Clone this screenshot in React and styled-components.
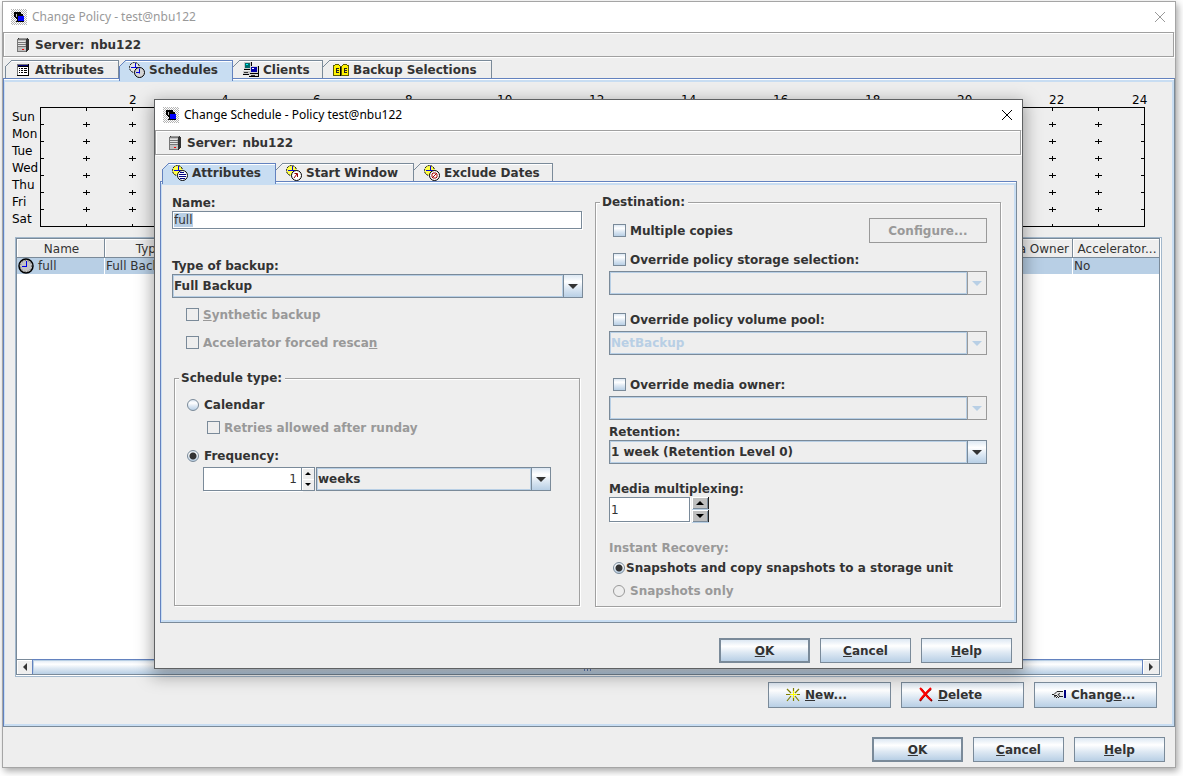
import React, { useEffect, useRef, useState } from 'react';
import styled, { createGlobalStyle, css } from 'styled-components';

const ink = '#333';
const steel = '#7a8a99';
const blue = '#6382bf';
const pale = '#c8ddf2';
const sky = '#b8cfe5';
const face = '#eee';
const dim = '#999';
const ocean = 'linear-gradient(#dde8f3, #fff 30%, #dde8f3 60%, #b8cfe5)';

const GlobalStyle = createGlobalStyle`
  * {
    box-sizing: border-box;
  }

  body {
    margin: 0;
    background: #fff;
    color: ${ink};
    font: 12px/16px "DejaVu Sans", Verdana, sans-serif;
  }

  button, input, select {
    margin: 0;
    color: inherit;
    font: inherit;
    border-radius: 0;
    outline: none;
  }

  svg {
    display: block;
    flex: none;
  }
`;

const etched = css`
  border: 1px solid #a0a0a0;
  box-shadow: 1px 1px 0 #fff, inset 1px 1px 0 #fff;
`;

const Desktop = styled.div`
  position: relative;
  display: flex;
  min-height: 100vh;
  padding: 1px 7px 8px 2px;
`;

const MainWindow = styled.main`
  display: flex;
  flex: 1;
  flex-direction: column;
  min-width: 0;
  background: ${face};
  border: 1px solid #a5a5a5;
  box-shadow: 2px 3px 7px rgba(0, 0, 0, 0.35);
`;

const Dialog = styled.section`
  position: absolute;
  top: 99px;
  left: 154px;
  right: 160px;
  display: flex;
  flex-direction: column;
  background: ${face};
  border: 1px solid #5f6163;
  box-shadow: 0 5px 16px 2px rgba(0, 0, 0, 0.35);
`;

const TitleBar = styled.header`
  display: flex;
  align-items: center;
  gap: 5px;
  height: 30px;
  padding: 0 9px 0 8px;
  background: #fff;
  color: ${(props) => (props.$active ? '#000' : dim)};
  font: 12px/16px "Noto Sans", "Open Sans", sans-serif;
`;

const CloseButton = styled.button`
  display: flex;
  margin-left: auto;
  padding: 0;
  background: none;
  border: none;
`;

const ServerBar = styled.div`
  ${etched}
  display: flex;
  align-items: center;
  gap: 6px;
  height: 25px;
  margin: 0 1px 1px 0;
  padding: 0 12px;
  font-weight: bold;
`;

const TabList = styled.div`
  display: flex;
  margin: ${(props) => (props.$inset ? '7px 7px 0' : '2px 2px 0')};
`;

const Tab = styled.button`
  position: relative;
  display: flex;
  align-items: center;
  gap: 4px;
  width: ${(props) => props.$width}px;
  height: ${(props) => (props.$selected ? 21 : 18)}px;
  margin: 0 0 ${(props) => (props.$selected ? -3 : 0)}px;
  padding: 0 0 ${(props) => (props.$selected ? 3 : 0)}px 9px;
  z-index: ${(props) => (props.$selected ? 1 : 0)};
  background: ${(props) => (props.$selected ? pale : face)};
  border: 1px solid ${(props) => (props.$selected ? blue : steel)};
  border-bottom: none;
  border-left-color: ${(props) => (props.$selected ? blue : props.$first ? steel : 'transparent')};
  box-shadow: inset 0 1px 0 #fff;
  font-weight: bold;
  white-space: nowrap;

  &::before {
    content: '';
    position: absolute;
    top: -1px;
    left: -1px;
    width: 7px;
    height: 7px;
    background: linear-gradient(
      135deg,
      ${face} 43%,
      ${(props) => (props.$selected ? blue : steel)} 44% 55%,
      ${(props) => (props.$selected ? pale : face)} 56%
    );
  }
`;

const TabPanel = styled.div`
  display: flex;
  flex: 1;
  flex-direction: column;
  margin: ${(props) => (props.$inset ? '0 5px' : 0)};
  border: 1px solid ${steel};
  border-top-color: ${blue};
  border-left-color: ${blue};
  box-shadow: inset 0 1px 0 #fff, inset 0 3px 0 ${pale}, inset 1px 0 0 ${pale}, inset -2px -2px 0 ${pale};
`;

const ChartArea = styled.div`
  display: flex;
  padding: 28px 30px 10px 8px;
  color: #000;
`;

const DayNames = styled.div`
  flex: none;
  width: 28px;
  padding-top: 1px;
  line-height: 17px;

  div {
    padding-top: 1px;
    height: 17px;
  }
`;

const Chart = styled.svg`
  flex: 1;
  width: 100%;
  min-width: 0;
  height: 120px;
  overflow: visible;

  text {
    font-size: 12px;
  }
`;

const ScrollFrame = styled.div`
  display: flex;
  flex: 1;
  margin: 0 12px 0 11px;
  padding: 0 1px 1px 0;
  background: #fff;
  border: 1px solid #a3b8cc;
`;

const ScrollPane = styled.div`
  display: flex;
  flex: 1;
  flex-direction: column;
  justify-content: space-between;
  min-width: 0;
  border: 1px solid ${steel};
`;

const ScheduleTable = styled.table`
  width: 100%;
  table-layout: fixed;
  border-spacing: 0;

  th {
    height: 19px;
    padding: 2px 0 0 2px;
    background: ${face};
    border-right: 1px solid ${steel};
    border-bottom: 1px solid ${steel};
    box-shadow: inset 1px 1px 0 #fff;
    font-weight: normal;
    white-space: nowrap;
  }

  td {
    height: 16px;
    padding: 0 1px;
    background: ${sky};
    border-right: 1px solid #fff;
    white-space: nowrap;
  }

  th:last-child, td:last-child {
    border-right: none;
  }
`;

const Column = styled.col`
  width: ${(props) => props.$width || '88px'};
`;

const NameCell = styled.div`
  display: flex;
  gap: 4px;
`;

const ScrollBar = styled.div`
  display: flex;
  height: 15px;
  border-top: 1px solid ${steel};
`;

const ScrollButton = styled.button`
  display: flex;
  align-items: center;
  justify-content: center;
  width: ${(props) => (props.$wide ? 16 : 15)}px;
  padding: 0;
  background: ${face};
  border: none;
  box-shadow: inset 1px 1px 0 #fff;
`;

const Thumb = styled.div`
  display: flex;
  flex: 1;
  align-items: center;
  justify-content: center;
  margin-top: -1px;
  background: ${ocean};
  border: 1px solid ${blue};
  border-bottom: none;
  box-shadow: inset 1px 1px 0 ${sky};
`;

const ButtonRow = styled.div`
  display: flex;
  justify-content: flex-end;
  gap: 10px;
  padding: ${(props) => props.$pad};
`;

const Button = styled.button`
  display: flex;
  align-items: center;
  justify-content: center;
  width: ${(props) => props.$width || 91}px;
  height: 25px;
  padding: 0;
  background: ${ocean};
  border: ${(props) => (props.$primary ? 2 : 1)}px solid ${steel};
  font-weight: bold;

  &:disabled {
    background: ${face};
    border-color: ${dim};
    color: ${dim};
  }
`;

const IconButton = styled(Button)`
  justify-content: flex-start;
  gap: 4px;
  width: 123px;
  height: 26px;
  padding-left: 16px;
`;

const DialogBody = styled.div`
  display: grid;
  grid-template-columns: 411fr 406fr;
  gap: 12px;
  padding: 12px 15px 15px 11px;
`;

const LeftColumn = styled.div`
  display: flex;
  flex-direction: column;
  min-width: 0;
  padding: 1px 0;
`;

const FieldLabel = styled.label`
  display: block;
  height: 16px;
  margin-top: ${(props) => props.$top || 0}px;
  color: ${(props) => (props.$dim ? dim : ink)};
  font-weight: bold;
`;

const TextInput = styled.input`
  height: ${(props) => props.$height || 18}px;
  width: ${(props) => (props.$width ? `${props.$width}px` : 'auto')};
  margin-right: ${(props) => (props.$width ? 0 : 1)}px;
  padding: 0 1px;
  background: #fff;
  border: 1px solid ${steel};
  box-shadow: 1px 1px 0 #fff;
  text-align: ${(props) => props.$align || 'left'};

  &::selection {
    background: ${sky};
    color: ${ink};
  }
`;

const NumberInput = styled(TextInput)`
  padding-right: ${(props) => (props.$align === 'right' ? 4 : 1)}px;
`;

const Group = styled.fieldset`
  ${etched}
  flex: 1;
  min-width: 0;
  margin: ${(props) => props.$margin || 0};
  padding: ${(props) => props.$pad};
`;

const Legend = styled.legend`
  height: 16px;
  margin-left: ${(props) => props.$shift}px;
  padding: 0 3px 0 2px;
  background: ${face};
  font-weight: bold;
`;

const Option = styled.label`
  display: flex;
  align-items: center;
  gap: ${(props) => (props.$gap === undefined ? 4 : props.$gap)}px;
  height: 15px;
  margin: ${(props) => props.$top || 0}px 0 0 ${(props) => props.$left || 0}px;
  color: ${(props) => (props.$dim ? dim : ink)};
  font-weight: bold;
  white-space: nowrap;
`;

const Check = styled.input.attrs({ type: 'checkbox' })`
  flex: none;
  appearance: none;
  width: 13px;
  height: 13px;
  background: ${ocean};
  border: 1px solid ${steel};

  &:checked {
    background: ${steel};
  }

  &:disabled {
    background: ${face};
  }
`;

const Radio = styled.input.attrs({ type: 'radio' })`
  flex: none;
  appearance: none;
  width: 12px;
  height: 12px;
  background: ${ocean};
  border: 1px solid ${steel};
  border-radius: 50%;

  &:checked {
    background: radial-gradient(circle, ${ink} 3px, transparent 4px), ${ocean};
  }

  &:disabled {
    background: ${face};
    border-color: ${dim};
  }
`;

const ComboBox = styled.div`
  display: flex;
  width: ${(props) => (props.$width ? `${props.$width}px` : 'auto')};
  height: 24px;
  margin-top: ${(props) => props.$top || 0}px;

  select {
    flex: 1;
    min-width: 0;
    appearance: none;
    padding: 0 1px;
    background: ${face};
    border: 1px solid ${steel};
    border-right: none;
    box-shadow: inset 0 0 0 1px ${sky};
    font-weight: bold;
  }

  select:disabled {
    color: ${sky};
    opacity: 1;
  }
`;

const ArrowButton = styled.button`
  display: flex;
  align-items: center;
  justify-content: center;
  width: 20px;
  padding: 0;
  background: ${ocean};
  border: 1px solid ${steel};
  color: ${ink};

  &:disabled {
    background: ${face};
    border-color: ${dim};
    color: ${sky};
  }
`;

const CopiesRow = styled.div`
  display: flex;
  align-items: center;
  justify-content: space-between;
  height: 25px;
  margin-top: 8px;
  padding-left: 4px;
`;

const SpinRow = styled.div`
  display: flex;
  gap: ${(props) => props.$gap || 0}px;
  margin: ${(props) => props.$top || 0}px 0 0 ${(props) => props.$left || 0}px;
`;

const SpinButtons = styled.div`
  display: grid;
  grid-template-rows: 1fr 1fr;
  gap: ${(props) => (props.$raised ? 1 : 0)}px;
  width: ${(props) => (props.$raised ? 17 : 13)}px;
  margin-right: 1px;

  button {
    display: flex;
    align-items: center;
    justify-content: center;
    min-height: 0;
    padding: 0;
    background: ${(props) => (props.$raised ? '#bfbfbf' : face)};
    border: 0 solid ${(props) => (props.$raised ? '#222' : steel)};
    border-width: ${(props) => (props.$raised ? '0 1px 0 0' : '1px 1px 0 0')};
    box-shadow: ${(props) => (props.$raised ? `inset 1px 1px 0 #fff, inset -1px -1px 0 ${steel}, 0 1px 0 ${sky}` : 'inset 1px 1px 0 #fff')};
    color: #000;
  }

  button:last-child {
    border-top-width: 0;
    border-bottom-width: ${(props) => (props.$raised ? 0 : 1)}px;
  }
`;

const WindowIcon = () => (
  <svg width="16" height="16" shapeRendering="crispEdges">
    <defs>
      <pattern id="dither" width="2" height="2" patternUnits="userSpaceOnUse">
        <path d="M0 0h1v1h-1zM1 1h1v1h-1z" fill="#b4b4b4" />
      </pattern>
    </defs>
    <path fill="url(#dither)" d="M0 0h16v16H0z" />
    <path fill="#000" d="M3 3h7v2H5v3H3zM4 8h2v2H5V9H4z" />
    <path fill="#c0c0c0" d="M5 5h2v2H5z" />
    <path fill="#000" d="M6 5h6v2H6zM6 7h1v5H6zM5 12h8v1H5z" />
    <path fill="#00f" d="M7 7h6v5H7z" />
  </svg>
);

const CloseIcon = () => (
  <svg width="12" height="12" stroke="currentColor" fill="none">
    <path d="M1 1l10 10M11 1L1 11" />
  </svg>
);

const ServerIcon = () => (
  <svg width="13" height="16" shapeRendering="crispEdges">
    <path d="M2 1h10v1h1v11h-1v1h-1v1H1V2h1z" fill="#333" />
    <path d="M3 1h8v1H2v1h8v1H1V3h1V2h1z" fill="#999" />
    <path d="M1 3h9v12H1z" fill="#c0c0c0" />
    <path d="M1 2h9v1H1zM1 3h1v12H1zM2 5h8v1H2zM2 7h8v1H2zM2 9h8v1H2zM1 14h9v1H1z" fill="#777" />
    <path d="M2 4h7v1H2zM2 6h7v1H2zM2 8h7v1H2z" fill="#e4e4e4" />
    <path d="M6 12h2v1H6z" fill="#f00" />
  </svg>
);

const ListIcon = () => (
  <svg width="16" height="16" shapeRendering="crispEdges">
    <path d="M2 2h12v12H2z" fill="#000" />
    <path d="M3 5h10v8H3z" fill="#fff" />
    <path d="M2 2h11v1H2zM2 3h1v10H2z" fill="#777" />
    <path d="M3 3h10v1H3z" fill="#00007b" />
    <path d="M4 6h1v1H4zM4 8h1v1H4zM4 10h1v1H4zM6 6h2v1H6zM9 6h3v1H9zM6 8h2v1H6zM9 8h3v1H9zM6 10h2v1H6zM9 10h3v1H9z" fill="#000" />
  </svg>
);

const ClocksIcon = ({ kind }) => (
  <svg width="16" height="16" fill="none">
    <circle cx="5.500" cy="5.500" r="5" fill={kind ? '#ffff4a' : '#e4e4e4'} stroke="#000" strokeDasharray="2 1" />
    <path d="M6.500 1v5M2 5.500h7" stroke="#00d" />
    <circle cx="10.500" cy="10.500" r="5" fill={kind ? '#fff' : '#d4d4d4'} stroke="#000" />
    {!kind && <path d="M10.500 6.500v5M7 10.500h4" stroke="#00d" />}
    {kind === 'list' && <path d="M8 7.500h4M7 9.500h7M7 11.500h7M8 13.500h5" stroke="#000080" />}
    {kind === 'start' && <path d="M8 13l3-4M8.500 8.500h3V12" stroke="#900" />}
    {kind === 'exclude' && <path d="M9 8h3l1 1v3l-1 1H9l-1-1V9zM9 12l3-3" stroke="#a00000" />}
  </svg>
);

const ClientsIcon = () => (
  <svg width="16" height="16" shapeRendering="crispEdges">
    <path d="M1 0h8v8H1zM0 9h8v4H0z" fill="#000" />
    <path d="M1 0h7v7H1zM0 9h7v3H0z" fill="#c8c8c8" />
    <path d="M2 1h5v5H2z" fill="#006c6c" />
    <path d="M3 2h2v1H3z" fill="#0ff" />
    <path d="M1 10h4v1H1z" fill="#333" />
    <path d="M7 4h9v8H7zM6 12h10v3H6z" fill="#000" />
    <path d="M7 4h8v7H7zM6 12h9v2H6z" fill="#d4d4d4" />
    <path d="M8 5h6v5H8z" fill="#0000a8" />
    <path d="M9 6h2v1H9z" fill="#fff" />
    <path d="M8 13h4v1H8z" fill="#333" />
  </svg>
);

const SelectionsIcon = () => (
  <svg width="16" height="16" shapeRendering="crispEdges">
    <path d="M0 3h2V2h4v1h1v1h2V3h1V2h4v1h2v11H0z" fill="#5c5c00" />
    <path d="M1 4h1V3h4v1h1v9H1zM9 4h1V3h4v1h1v9H9z" fill="#fff200" />
    <path d="M3 6h3v1H4v1h2v1H4v1h2v1H3zM11 6h3v1h-2v1h2v1h-2v1h2v1h-3z" fill="#222" />
    <path d="M7 5h1v9H7z" fill="#000" />
  </svg>
);

const ClockIcon = () => (
  <svg width="16" height="16">
    <circle cx="8" cy="8" r="7" fill="#c4c4c4" stroke="#000" strokeWidth="1.500" />
    <circle cx="8" cy="8" r="5.500" fill="none" stroke="#555" strokeDasharray="1 2" />
    <path d="M8.500 3v6M4 8.500h5" stroke="#0000e8" />
  </svg>
);

const NewIcon = () => (
  <svg width="16" height="16" fill="none">
    <path d="M8.500 1v5M8.500 9v5M1 7.500h5M10 7.500h5M2 2l4 4M14 2l-4 4M2 14l4-5M14 14l-4-5" stroke="#808000" strokeWidth="1.200" />
    <path d="M8.500 4v7M5 7.500h7" stroke="#ff0" />
  </svg>
);

const DeleteIcon = () => (
  <svg width="16" height="16" fill="none">
    <path d="M3 2c3 3 6 8 11 12M13 2C9 5 5 10 2 14" stroke="#700" strokeWidth="2" />
    <path d="M2 1c3 3 6 8 11 12M13 1C9 5 5 9 2 13" stroke="#f00" strokeWidth="2" />
  </svg>
);

const ChangeIcon = () => (
  <svg width="16" height="16" fill="none">
    <path d="M1 8l5-4h6l1 6H9l-1 1-2-1-2 1 1-3z" fill="#e8e8e8" />
    <path d="M1 7.500h2l3-3h6M3 8.500h3M3 10l2-1M5 11l2-2M7 11l2-2M12 9.500H9l-2-2 2-1" stroke="#222" />
    <path d="M13 3h2v8h-2z" fill="#000080" />
  </svg>
);

const Arrow = ({ dir = 'down', size = 5 }) => {
  const long = size * 2;
  const flat = dir === 'left' || dir === 'right';
  const paths = {
    down: `M0 0h${long}l-${size} ${size}z`,
    up: `M0 ${size}h${long}l-${size} -${size}z`,
    left: `M${size} 0v${long}l-${size} -${size}z`,
    right: `M0 0v${long}l${size} -${size}z`,
  };
  return (
    <svg width={flat ? size : long} height={flat ? long : size}>
      <path d={paths[dir]} fill="currentColor" />
    </svg>
  );
};

const Combo = ({ id, options, disabled, top, width, label }) => (
  <ComboBox $top={top} $width={width}>
    <select id={id} disabled={disabled} aria-label={label}>
      {options.map((option) => (
        <option key={option}>{option}</option>
      ))}
    </select>
    <ArrowButton type="button" tabIndex={-1} aria-hidden="true" disabled={disabled}>
      <Arrow />
    </ArrowButton>
  </ComboBox>
);

const days = ['Sun', 'Mon', 'Tue', 'Wed', 'Thu', 'Fri', 'Sat'];
const hours = Array.from({ length: 23 }, (_, i) => i + 1);
const rows = [17, 34, 51, 68, 85, 102];
const at = (hour) => `${(hour / 24) * 100}%`;

const WeekChart = () => (
  <ChartArea>
    <DayNames>
      {days.map((day) => (
        <div key={day}>{day}</div>
      ))}
    </DayNames>
    <Chart stroke="#000" shapeRendering="crispEdges">
      <path d="M.5 0v120M0 17.500h4M0 34.500h4M0 51.500h4M0 68.500h4M0 85.500h4M0 102.500h4" />
      <line x1="0" x2="100%" y1="0.5" y2="0.5" />
      <line x1="0" x2="100%" y1="119.5" y2="119.5" />
      {hours.map((hour) => (
        <svg key={hour} x={at(hour)} overflow="visible">
          <path d="M.5 0v4M.5 117v3" />
          {rows.map((y) => (
            <path key={y} d={`M-3 ${y + 0.5}h7M.5 ${y - 2}v5`} />
          ))}
          {hour % 2 === 0 && <text x="-3" y="-3" stroke="none">{hour}</text>}
        </svg>
      ))}
      <svg x="100%" overflow="visible">
        <path d="M.5 0v120M-3 17.500h4M-3 34.500h4M-3 51.500h4M-3 68.500h4M-3 85.500h4M-3 102.500h4" />
        <text x="-12" y="-3" stroke="none">24</text>
      </svg>
    </Chart>
  </ChartArea>
);

const Title = ({ text, active }) => (
  <TitleBar $active={active}>
    <WindowIcon />
    <span>{text}</span>
    <CloseButton type="button" aria-label="Close">
      <CloseIcon />
    </CloseButton>
  </TitleBar>
);

const Server = () => (
  <ServerBar>
    <ServerIcon />
    <span>Server:</span>
    <span>nbu122</span>
  </ServerBar>
);

const DialogButtons = ({ pad }) => (
  <ButtonRow $pad={pad}>
    <Button type="button" $primary><span><u>O</u>K</span></Button>
    <Button type="button"><span><u>C</u>ancel</span></Button>
    <Button type="button"><span><u>H</u>elp</span></Button>
  </ButtonRow>
);

const Schedules = () => (
  <ScrollFrame>
    <ScrollPane>
      <ScheduleTable>
        <colgroup>
          <Column />
          <Column />
          <Column $width="auto" />
          <Column />
          <Column $width="86px" />
        </colgroup>
        <thead>
          <tr>
            <th>Name</th>
            <th>Type</th>
            <th aria-label="Details" />
            <th>Media Owner</th>
            <th>Accelerator...</th>
          </tr>
        </thead>
        <tbody>
          <tr>
            <td><NameCell><ClockIcon />full</NameCell></td>
            <td>Full Backup</td>
            <td />
            <td />
            <td>No</td>
          </tr>
        </tbody>
      </ScheduleTable>
      <ScrollBar>
        <ScrollButton type="button" aria-label="Scroll left"><Arrow dir="left" size={4} /></ScrollButton>
        <Thumb>
          <svg width="7" height="8" fill={blue}>
            <path d="M0 0h1v8H0zM3 0h1v8H3zM6 0h1v8H6z" />
          </svg>
        </Thumb>
        <ScrollButton type="button" $wide aria-label="Scroll right"><Arrow dir="right" size={4} /></ScrollButton>
      </ScrollBar>
    </ScrollPane>
  </ScrollFrame>
);

const ScheduleForm = () => {
  const nameRef = useRef(null);
  const [type, setType] = useState('frequency');

  useEffect(() => {
    nameRef.current.focus();
    nameRef.current.select();
  }, []);

  return (
    <DialogBody>
      <LeftColumn>
        <FieldLabel htmlFor="name">Name:</FieldLabel>
        <TextInput id="name" ref={nameRef} defaultValue="full" />
        <FieldLabel htmlFor="backup-type" $top={29}>Type of backup:</FieldLabel>
        <Combo id="backup-type" options={['Full Backup']} />
        <Option $dim $top={9} $left={14}>
          <Check disabled />
          <span><u>S</u>ynthetic backup</span>
        </Option>
        <Option $dim $top={13} $left={14}>
          <Check disabled />
          <span>Accelerator forced resca<u>n</u></span>
        </Option>
        <Group $margin="20px 3px 0 2px" $pad="0 12px">
          <Legend $shift={-8}>Schedule type:</Legend>
          <Option $top={11} $gap={5}>
            <Radio name="type" checked={type === 'calendar'} onChange={() => setType('calendar')} />
            Calendar
          </Option>
          <Option $dim $top={8} $left={20}>
            <Check disabled />
            Retries allowed after runday
          </Option>
          <Option $top={13} $gap={5}>
            <Radio name="type" checked={type === 'frequency'} onChange={() => setType('frequency')} />
            Frequency:
          </Option>
          <SpinRow $top={4} $left={16}>
            <NumberInput aria-label="Frequency" $width={99} $height={24} $align="right" defaultValue="1" />
            <SpinButtons>
              <button type="button" aria-label="More"><Arrow dir="up" size={3} /></button>
              <button type="button" aria-label="Less"><Arrow size={3} /></button>
            </SpinButtons>
            <Combo label="Frequency unit" width={235} options={['weeks']} />
          </SpinRow>
        </Group>
      </LeftColumn>
      <Group $pad="0 13px 8px">
        <Legend $shift={-9}>Destination:</Legend>
        <CopiesRow>
          <Option>
            <Check />
            Multiple copies
          </Option>
          <Button type="button" $width={118} disabled><span>Confi<u>g</u>ure...</span></Button>
        </CopiesRow>
        <Option $top={9} $left={4}>
          <Check />
          Override policy storage selection:
        </Option>
        <Combo label="Storage" top={4} options={['']} disabled />
        <Option $top={17} $left={4}>
          <Check />
          Override policy volume pool:
        </Option>
        <Combo label="Volume pool" top={4} options={['NetBackup']} disabled />
        <Option $top={22} $left={4}>
          <Check />
          Override media owner:
        </Option>
        <Combo label="Media owner" top={4} options={['']} disabled />
        <FieldLabel htmlFor="retention" $top={4}>Retention:</FieldLabel>
        <Combo id="retention" options={['1 week (Retention Level 0)']} />
        <FieldLabel htmlFor="multiplexing" $top={17}>Media multiplexing:</FieldLabel>
        <SpinRow $gap={2}>
          <NumberInput id="multiplexing" $width={81} $height={25} defaultValue="1" />
          <SpinButtons $raised>
            <button type="button" aria-label="More"><Arrow dir="up" size={4} /></button>
            <button type="button" aria-label="Less"><Arrow size={4} /></button>
          </SpinButtons>
        </SpinRow>
        <FieldLabel as="div" $dim $top={18}>Instant Recovery:</FieldLabel>
        <Option $top={4} $left={4} $gap={1}>
          <Radio name="recovery" defaultChecked />
          Snapshots and copy snapshots to a storage unit
        </Option>
        <Option $dim $top={8} $left={4} $gap={5}>
          <Radio name="recovery" disabled />
          Snapshots only
        </Option>
      </Group>
    </DialogBody>
  );
};

const App = () => (
  <Desktop>
    <GlobalStyle />
    <MainWindow>
      <Title text="Change Policy - test@nbu122" />
      <Server />
      <TabList>
        <Tab type="button" $first $width={114}><ListIcon />Attributes</Tab>
        <Tab type="button" $selected $width={114}><ClocksIcon />Schedules</Tab>
        <Tab type="button" $width={90}><ClientsIcon />Clients</Tab>
        <Tab type="button" $width={169}><SelectionsIcon />Backup Selections</Tab>
      </TabList>
      <TabPanel>
        <WeekChart />
        <Schedules />
        <ButtonRow $pad="5px 17px 18px">
          <IconButton type="button"><NewIcon /><span><u>N</u>ew...</span></IconButton>
          <IconButton type="button"><DeleteIcon /><span><u>D</u>elete</span></IconButton>
          <IconButton type="button"><ChangeIcon /><span>Chang<u>e</u>...</span></IconButton>
        </ButtonRow>
      </TabPanel>
      <DialogButtons pad="10px 10px 5px" />
    </MainWindow>
    <Dialog role="dialog" aria-label="Change Schedule">
      <Title active text="Change Schedule - Policy test@nbu122" />
      <Server />
      <TabList $inset>
        <Tab type="button" $selected $width={114}><ClocksIcon kind="list" />Attributes</Tab>
        <Tab type="button" $width={138}><ClocksIcon kind="start" />Start Window</Tab>
        <Tab type="button" $width={139}><ClocksIcon kind="exclude" />Exclude Dates</Tab>
      </TabList>
      <TabPanel $inset>
        <ScheduleForm />
      </TabPanel>
      <DialogButtons pad="15px 10px 5px" />
    </Dialog>
  </Desktop>
);

export default App;
